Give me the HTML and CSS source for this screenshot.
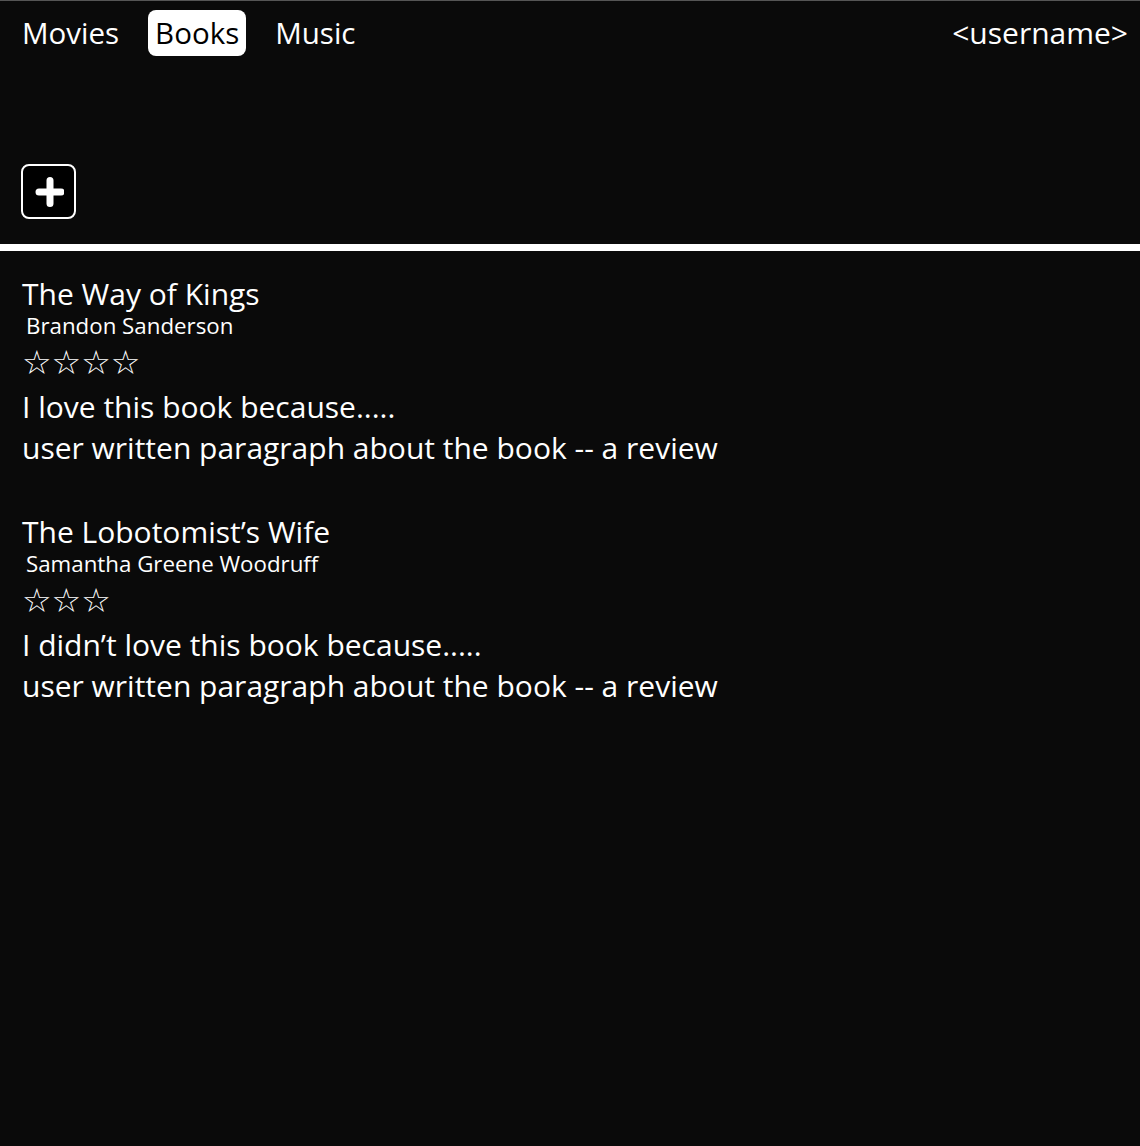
FILE: index.html
```html
<!DOCTYPE html>
<html>
<head>
<meta charset="utf-8">
<link rel="stylesheet" href="styles.css">
</head>
<body>
<header class="top">
  <nav class="nav">
    <a class="tab">Movies</a>
    <a class="tab active">Books</a>
    <a class="tab">Music</a>
  </nav>
  <div class="user">&lt;username&gt;</div>
</header>
<div class="toolbar">
  <button class="add" aria-label="Add">
    <svg width="30" height="30" viewBox="0 0 30 30"><path d="M16 3.5V26.5M5 15H27" stroke="#fff" stroke-width="7" stroke-linecap="round"/></svg>
  </button>
</div>
<div class="divider"></div>
<main class="list">
  <article class="entry">
    <h2 class="title">The Way of Kings</h2>
    <div class="author">Brandon Sanderson</div>
    <div class="stars">☆☆☆☆</div>
    <p class="review">I love this book because.....<br>user written paragraph about the book -- a review</p>
  </article>
  <article class="entry">
    <h2 class="title">The Lobotomist’s Wife</h2>
    <div class="author">Samantha Greene Woodruff</div>
    <div class="stars">☆☆☆</div>
    <p class="review">I didn’t love this book because.....<br>user written paragraph about the book -- a review</p>
  </article>
</main>
</body>
</html>
```
FILE: styles.css
```css
html, body {
  margin: 0;
  padding: 0;
  background: #0a0a0a;
  color: #fff;
  font-family: "Open Sans", "Noto Sans", sans-serif;
  height: 100%;
}
body {
  border-top: 1px solid #555;
  box-sizing: border-box;
}
.top {
  display: flex;
  justify-content: space-between;
  align-items: center;
  padding: 9px 12px 0 15px;
}
.nav {
  display: flex;
  gap: 22px;
}
.tab {
  font-size: 29.5px;
  line-height: 46px;
  padding: 0 7px;
  border-radius: 8px;
  color: #fff;
}
.tab.active {
  background: #fff;
  color: #000;
}
.user {
  font-size: 30px;
  line-height: 46px;
}
.toolbar {
  padding: 108px 0 25px 21px;
}
.add {
  width: 55px;
  height: 55px;
  box-sizing: border-box;
  border: 2px solid #fff;
  border-radius: 8px;
  background: #000;
  display: flex;
  align-items: center;
  justify-content: center;
  padding: 0;
}
.divider {
  height: 7px;
  background: #fff;
}
.list {
  padding: 25px 22px 0 22px;
}
.entry {
  margin-bottom: 46px;
}
.title {
  font-weight: 400;
  font-size: 30px;
  line-height: 36px;
  margin: 0;
}
.author {
  font-size: 22.3px;
  line-height: 27px;
  padding-left: 4px;
}
.stars {
  font-size: 33px;
  line-height: 47px;
  font-family: "DejaVu Sans", sans-serif;
}
.review {
  font-size: 30px;
  line-height: 41px;
  margin: 0;
}
```
